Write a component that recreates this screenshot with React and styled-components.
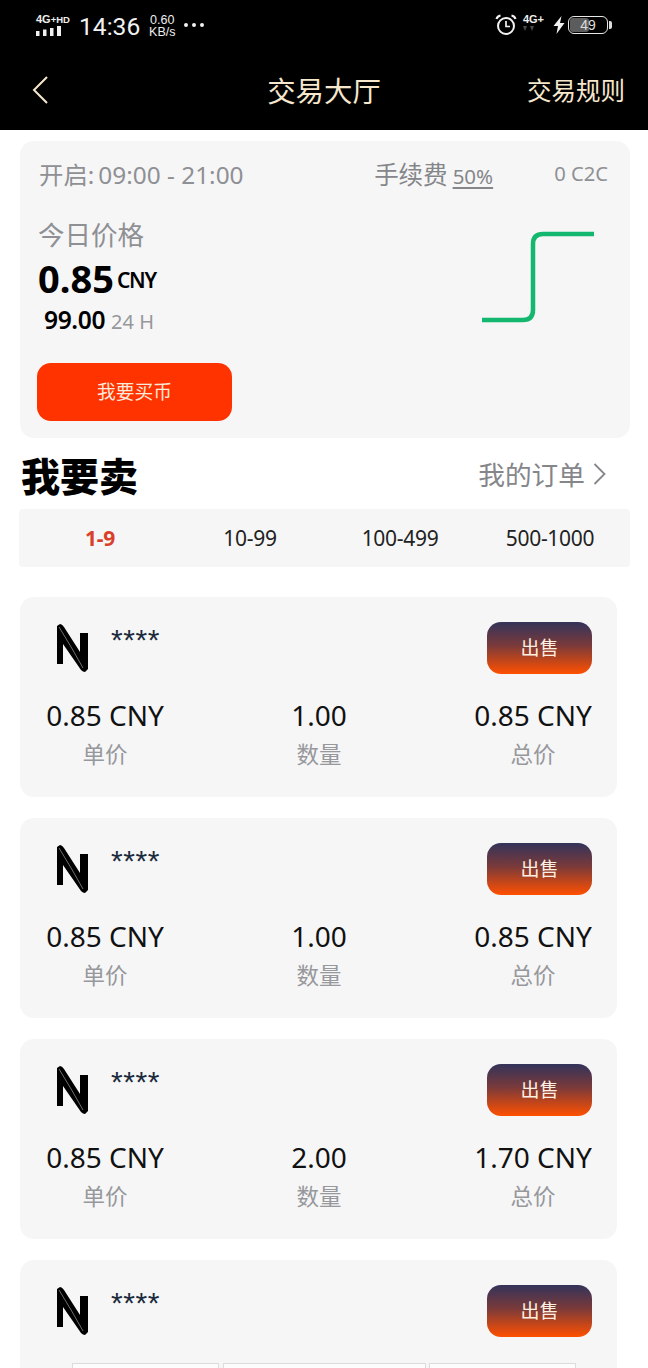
import React from "react";
import styled, { createGlobalStyle } from "styled-components";

const Global = createGlobalStyle`
  html, body { margin: 0; padding: 0; background: #fff; }
  body { font-family: "Noto Sans", "Noto Sans CJK SC", sans-serif; }
  * { box-sizing: border-box; }
`;

const Page = styled.div`
  width: 648px;
  height: 1368px;
  overflow: hidden;
  background: #fff;
  font-family: "Noto Sans", "Noto Sans CJK SC", sans-serif;
`;

const Header = styled.header`
  height: 130px;
  background: #000;
  display: flex;
  flex-direction: column;
`;

const StatusBar = styled.div`
  height: 50px;
  padding: 12px 36px 0 36px;
  display: flex;
  justify-content: space-between;
  align-items: flex-start;
  color: #fff;
  font-family: "Liberation Sans", sans-serif;
`;

const StatusSide = styled.div`
  display: flex;
  align-items: center;
  height: 26px;
`;

const Clock = styled.span`
  font-size: 24.6px;
  line-height: 28px;
  margin: 3px 0 0 8px;
  font-family: "Roboto", sans-serif;
  color: #f2f2f2;
`;

const Speed = styled.span`
  display: flex;
  flex-direction: column;
  align-items: center;
  width: 28px;
  font-size: 12.5px;
  line-height: 12px;
  margin: 2px 0 0 8px;
  color: #eee;
`;

const Dots = styled.span`
  display: flex;
  gap: 4px;
  margin-left: 8px;
`;

const Dot = styled.i`
  width: 4px;
  height: 4px;
  border-radius: 50%;
  background: #f0f0f0;
`;

const TinyBold = styled.span`
  font-size: 11px;
  font-weight: 700;
  line-height: 11px;
  color: #eee;
`;

const TinySup = styled.span`
  font-size: 9.5px;
  font-weight: 700;
`;

const NetStack = styled.span`
  display: flex;
  flex-direction: column;
  align-items: flex-start;
  gap: 1px;
  width: ${(p) => (p.$wide ? "35px" : "auto")};
  height: 24px;
  padding-top: 1px;
  margin-left: ${(p) => p.$offset || 0}px;
`;

const Battery = styled.span`
  position: relative;
  width: 40px;
  height: 18px;
  margin-left: 3px;
  border: 1.5px solid #e8e8e8;
  border-radius: 6px;
  overflow: hidden;
  display: flex;
  align-items: center;
  justify-content: center;
  font-size: 14px;
  color: #ddd;
`;

const BatteryFill = styled.span`
  position: absolute;
  left: 1px;
  top: 1px;
  bottom: 1px;
  background: #5c5c5c;
  border-radius: 3px;
`;

const BatteryNum = styled.span`
  position: relative;
`;

const BatteryCap = styled.span`
  width: 3px;
  height: 8px;
  margin-left: 1px;
  background: #ddd;
  border-radius: 0 2px 2px 0;
`;

const BoltSlot = styled.span`
  display: flex;
  margin-left: 9px;
`;

const NavBar = styled.nav`
  position: relative;
  flex: 1;
  display: flex;
  align-items: center;
  justify-content: center;
  color: #f6e7cd;
`;

const NavBack = styled.span`
  position: absolute;
  left: 32px;
  top: 26px;
  display: flex;
`;

const NavTitle = styled.h1`
  margin: 0;
  font-size: 28.4px;
  font-weight: 400;
  line-height: 40px;
  font-family: "Noto Sans CJK SC", sans-serif;
`;

const NavRule = styled.span`
  position: absolute;
  right: 23px;
  top: 20px;
  font-size: 24.5px;
  line-height: 40px;
  font-family: "Noto Sans CJK SC", sans-serif;
`;

const Main = styled.main`
  padding: 11px 0 0 20px;
`;

const MarketCard = styled.section`
  width: 610px;
  height: 297px;
  background: #f6f6f7;
  border-radius: 14px;
  padding: 12px 22px 0 18px;
`;

const MarketTop = styled.div`
  display: flex;
  align-items: center;
  height: 40px;
  color: #8f9094;
`;

const Hours = styled.span`
  font-size: 24.4px;
  flex: 1;
  padding-left: 1px;
`;

const HoursTime = styled.span`
  margin-left: 4px;
`;

const Fee = styled.span`
  font-size: 24.5px;
  color: #85868a;
`;

const FeeValue = styled.span`
  font-size: 20.5px;
  margin-left: 5px;
  text-decoration: underline;
  text-underline-offset: 3px;
`;

const Pair = styled.span`
  font-size: 20.2px;
  margin-left: 61px;
`;

const MarketBody = styled.div`
  display: flex;
  justify-content: space-between;
  align-items: flex-start;
  padding-top: 23px;
`;

const PriceBlock = styled.div`
  display: flex;
  flex-direction: column;
`;

const PriceLabel = styled.div`
  font-size: 26.5px;
  line-height: 38px;
  color: #8f9094;
`;

const PriceRow = styled.div`
  display: flex;
  align-items: flex-end;
  height: 48px;
  color: #000;
`;

const PriceValue = styled.span`
  font-size: 38px;
  font-weight: 700;
  line-height: 48px;
`;

const PriceUnit = styled.span`
  font-size: 21px;
  font-weight: 600;
  line-height: 30px;
  padding-bottom: 7px;
  margin-left: 3px;
  letter-spacing: -1.2px;
`;

const VolumeRow = styled.div`
  display: flex;
  align-items: baseline;
  padding-left: 6px;
  line-height: 34px;
  margin-top: 1px;
`;

const VolumeValue = styled.span`
  font-size: 24.6px;
  font-weight: 600;
  letter-spacing: -0.4px;
  color: #000;
`;

const VolumeUnit = styled.span`
  font-size: 20px;
  margin-left: 6px;
  color: #97989b;
`;

const Spark = styled.svg`
  display: block;
  margin: 15px 13px 0 0;
`;

const BuyButton = styled.button`
  display: block;
  width: 195px;
  height: 58px;
  margin: 24px 0 0 -1px;
  border: 0;
  border-radius: 14px;
  background: #ff3300;
  color: #fbe9dc;
  font-size: 18.75px;
  font-family: "Noto Sans CJK SC", sans-serif;
  padding: 0 0 3px;
`;

const SectionHead = styled.div`
  display: flex;
  align-items: center;
  justify-content: space-between;
  width: 610px;
  height: 71px;
  padding: 0 24px 0 1px;
`;

const SectionTitle = styled.h2`
  margin: 0;
  font-size: 39px;
  font-weight: 900;
  line-height: 50px;
  color: #000;
  font-family: "Noto Sans CJK SC", sans-serif;
`;

const OrdersLink = styled.span`
  display: flex;
  align-items: center;
  gap: 8px;
  font-size: 26.7px;
  color: #85868a;
  font-family: "Noto Sans CJK SC", sans-serif;
`;

const Tabs = styled.div`
  width: 611px;
  height: 58px;
  margin-left: -1px;
  padding: 0 5px 0 6px;
  display: grid;
  grid-template-columns: repeat(4, 150px);
  align-items: center;
  background: #f6f6f7;
  border-radius: 4px;
`;

const Tab = styled.span`
  text-align: center;
  font-size: 21px;
  font-weight: ${(p) => (p.$active ? 700 : 400)};
  letter-spacing: -0.3px;
  color: ${(p) => (p.$active ? "#d9402a" : "#222")};
`;

const List = styled.div`
  display: flex;
  flex-direction: column;
  gap: 21px;
  margin-top: 30px;
`;

const Order = styled.article`
  width: 597px;
  height: 200px;
  background: #f6f6f7;
  border-radius: 14px;
  padding: 25px 25px 0 26px;
`;

const OrderTop = styled.div`
  display: flex;
  align-items: flex-start;
  height: 75px;
`;

const Logo = styled.svg`
  display: block;
  margin: 2px 0 0 11px;
`;

const Masked = styled.span`
  flex: 1;
  margin-left: 22px;
  font-size: 30px;
  line-height: 36px;
  letter-spacing: 0.6px;
  color: #1c2c3c;
  font-family: "Liberation Sans", sans-serif;
`;

const SellButton = styled.button`
  width: 105px;
  height: 52px;
  border: 0;
  border-radius: 14px;
  padding: 0 0 3px;
  background: linear-gradient(180deg, #33335a 0%, #7a3a3a 45%, #ff5000 100%);
  color: #fdf0e0;
  font-size: 19px;
  font-family: "Noto Sans CJK SC", sans-serif;
`;

const Stats = styled.div`
  display: grid;
  grid-template-columns: 118px 1fr 118px;
  text-align: center;
`;

const Stat = styled.div`
  display: flex;
  flex-direction: column;
  align-items: center;
  white-space: nowrap;
`;

const StatValue = styled.span`
  font-size: 28px;
  line-height: 36px;
  color: #111;
`;

const StatLabel = styled.span`
  font-size: 22.5px;
  line-height: 40px;
  color: #97989b;
  font-family: "Noto Sans CJK SC", sans-serif;
`;

const Boxes = styled.div`
  display: grid;
  grid-template-columns: 147px 203px 147px;
  gap: 3.5px;
  margin: 3px 0 0 26px;
`;

const Box = styled.div`
  height: 60px;
  background: #fcfcfc;
  border: 1px solid #dcdcdc;
`;

const Logomark = () => (
  <Logo width="32" height="48" viewBox="0 0 32 48">
    <path d="M0 2 L3 0 Q5 0 7 3 L23 28 V9 H31 V45 L28 48 Q26 48 24 46 L6 20 V40 H0 Z" fill="#000" />
    <path d="M2 3 L14.7 24 L26 44" fill="none" stroke="#b8b8b8" strokeWidth="0.6" />
  </Logo>
);

const Back = () => (
  <svg width="16" height="28" viewBox="0 0 16 28" fill="none" stroke="#f6e7cd" strokeWidth="2">
    <path d="M15 1 L2 14 L15 27" />
  </svg>
);

const Chevron = () => (
  <svg width="13" height="22" viewBox="0 0 13 22" fill="none" stroke="#85868a" strokeWidth="1.8">
    <path d="M1.5 1 L11.5 11 L1.5 21" />
  </svg>
);

const Signal = () => (
  <svg width="26" height="10" viewBox="0 0 26 10" fill="#f0f0f0">
    <rect x="0" y="5" width="3.5" height="5" />
    <rect x="7" y="3.5" width="3.5" height="6.5" />
    <rect x="14" y="2" width="3.5" height="8" />
    <rect x="21" y="0" width="4" height="10" />
  </svg>
);

const DimSignal = () => (
  <svg width="12" height="5" viewBox="0 0 12 5" fill="#4a4a4a">
    <path d="M2 5 L0 0 H4 Z M9 5 L7 0 H11 Z" />
  </svg>
);

const Alarm = () => (
  <svg width="22" height="22" viewBox="0 0 22 22" fill="none" stroke="#f2f2f2" strokeWidth="2">
    <circle cx="11" cy="12" r="8" />
    <path d="M11 7 V12.5 H15" strokeWidth="1.7" />
    <path d="M1.5 5 Q2.5 2 5.5 1.5" strokeWidth="2.2" />
    <path d="M20.5 5 Q19.5 2 16.5 1.5" strokeWidth="2.2" />
  </svg>
);

const Bolt = () => (
  <svg width="12" height="18" viewBox="0 0 12 18" fill="#f2f2f2">
    <path d="M8.5 0 L0.5 10 H5 L3.5 18 L11.5 7 H7 Z" />
  </svg>
);

const orders = [
  { total: "0.85 CNY", qty: "1.00" },
  { total: "0.85 CNY", qty: "1.00" },
  { total: "1.70 CNY", qty: "2.00" },
];

const Item = () => (
  <OrderTop>
    <Logomark />
    <Masked>****</Masked>
    <SellButton>出售</SellButton>
  </OrderTop>
);

export default function App() {
  return (
    <Page>
      <Global />
      <Header>
        <StatusBar>
          <StatusSide>
            <NetStack $wide>
              <TinyBold>
                4G<TinySup>+HD</TinySup>
              </TinyBold>
              <Signal />
            </NetStack>
            <Clock>14:36</Clock>
            <Speed>
              <span>0.60</span>
              <span>KB/s</span>
            </Speed>
            <Dots>
              <Dot />
              <Dot />
              <Dot />
            </Dots>
          </StatusSide>
          <StatusSide>
            <Alarm />
            <NetStack $offset={6}>
              <TinyBold>4G+</TinyBold>
              <DimSignal />
            </NetStack>
            <BoltSlot>
              <Bolt />
            </BoltSlot>
            <Battery>
              <BatteryFill style={{ width: "49%" }} />
              <BatteryNum>49</BatteryNum>
            </Battery>
            <BatteryCap />
          </StatusSide>
        </StatusBar>
        <NavBar>
          <NavBack>
            <Back />
          </NavBack>
          <NavTitle>交易大厅</NavTitle>
          <NavRule>交易规则</NavRule>
        </NavBar>
      </Header>
      <Main>
        <MarketCard>
          <MarketTop>
            <Hours>
              开启:<HoursTime>09:00 - 21:00</HoursTime>
            </Hours>
            <Fee>
              手续费<FeeValue>50%</FeeValue>
            </Fee>
            <Pair>0 C2C</Pair>
          </MarketTop>
          <MarketBody>
            <PriceBlock>
              <PriceLabel>今日价格</PriceLabel>
              <PriceRow>
                <PriceValue>0.85</PriceValue>
                <PriceUnit>CNY</PriceUnit>
              </PriceRow>
              <VolumeRow>
                <VolumeValue>99.00</VolumeValue>
                <VolumeUnit>24 H</VolumeUnit>
              </VolumeRow>
            </PriceBlock>
            <Spark width="114" height="92" viewBox="0 0 114 92" fill="none">
              <path d="M1 89 H42 Q52 89 52 79 V13 Q52 3 62 3 H113" stroke="#13b86e" strokeWidth="4.5" />
            </Spark>
          </MarketBody>
          <BuyButton>我要买币</BuyButton>
        </MarketCard>
        <SectionHead>
          <SectionTitle>我要卖</SectionTitle>
          <OrdersLink>
            我的订单
            <Chevron />
          </OrdersLink>
        </SectionHead>
        <Tabs>
          <Tab $active>1-9</Tab>
          <Tab>10-99</Tab>
          <Tab>100-499</Tab>
          <Tab>500-1000</Tab>
        </Tabs>
        <List>
          {orders.map((o, i) => (
            <Order key={i}>
              <Item />
              <Stats>
                <Stat>
                  <StatValue>0.85 CNY</StatValue>
                  <StatLabel>单价</StatLabel>
                </Stat>
                <Stat>
                  <StatValue>{o.qty}</StatValue>
                  <StatLabel>数量</StatLabel>
                </Stat>
                <Stat>
                  <StatValue>{o.total}</StatValue>
                  <StatLabel>总价</StatLabel>
                </Stat>
              </Stats>
            </Order>
          ))}
          <Order>
            <Item />
            <Boxes>
              <Box />
              <Box />
              <Box />
            </Boxes>
          </Order>
        </List>
      </Main>
    </Page>
  );
}
